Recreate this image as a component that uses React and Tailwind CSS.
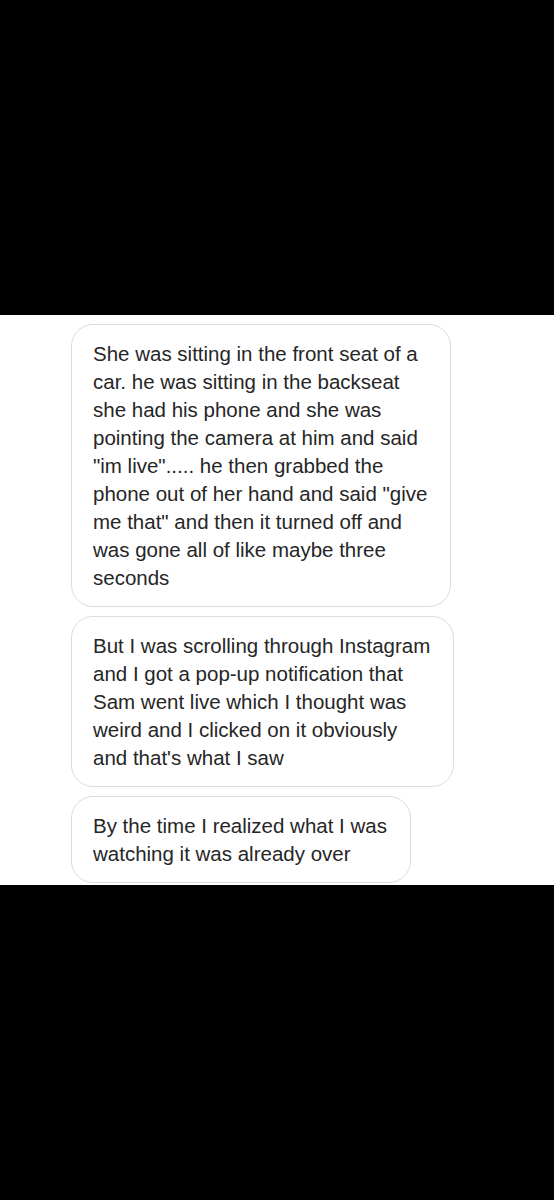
// App.jsx
// Screenshot of three received DM bubbles on a white strip, cropped between black bars

const messages = [
  [
    'She was sitting in the front seat of a',
    'car. he was sitting in the backseat',
    'she had his phone and she was',
    'pointing the camera at him and said',
    '"im live"..... he then grabbed the',
    'phone out of her hand and said "give',
    'me that" and then it turned off and',
    'was gone all of like maybe three',
    'seconds',
  ],
  [
    'But I was scrolling through Instagram',
    'and I got a pop-up notification that',
    'Sam went live which I thought was',
    'weird and I clicked on it obviously',
    "and that's what I saw",
  ],
  [
    'By the time I realized what I was',
    'watching it was already over',
  ],
];

function Bubble({ lines }) {
  return (
    <div className="self-start border border-[#dcdcdc] rounded-[22px] pl-[21px] pr-[23px] pt-[15px] pb-[14px] bg-white">
      {lines.map((line, i) => (
        <div key={i} className="whitespace-nowrap text-[20.5px] leading-[28px] text-[#262626]">
          {line}
        </div>
      ))}
    </div>
  );
}

export default function App() {
  return (
    <div
      className="flex flex-col h-[1200px] w-[554px] bg-black"
      style={{ fontFamily: '"Liberation Sans", Arial, sans-serif' }}
    >
      <div className="h-[315px] shrink-0 bg-black" />
      <div className="flex flex-col gap-[9px] bg-white pl-[71px] pt-[9px] pb-[2px]">
        {messages.map((lines, i) => (
          <Bubble key={i} lines={lines} />
        ))}
      </div>
      <div className="flex-1 bg-black" />
    </div>
  );
}
